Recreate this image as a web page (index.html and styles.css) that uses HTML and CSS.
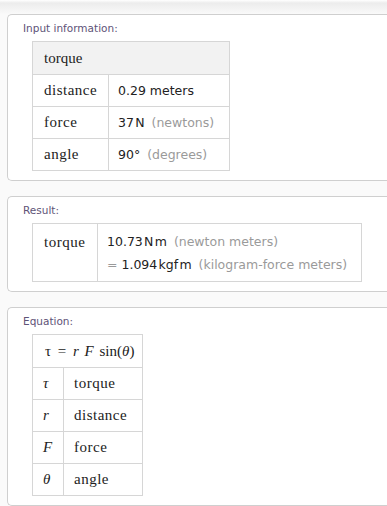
FILE: index.html
```html
<!DOCTYPE html>
<html>
<head>
<meta charset="utf-8">
<link rel="stylesheet" href="styles.css">
</head>
<body>
<div class="pods">
  <section class="pod">
    <div class="pod-title">Input information:</div>
    <table class="grid t-input">
      <colgroup><col class="c1"><col class="c2"></colgroup>
      <tr class="head"><td colspan="2" class="serif">torque</td></tr>
      <tr><td class="serif label">distance</td><td class="val">0.29 meters</td></tr>
      <tr><td class="serif label">force</td><td class="val">37<span class="thin"> </span>N <span class="unit">(newtons)</span></td></tr>
      <tr><td class="serif label">angle</td><td class="val">90° <span class="unit">(degrees)</span></td></tr>
    </table>
  </section>

  <section class="pod">
    <div class="pod-title">Result:</div>
    <table class="grid t-result">
      <colgroup><col class="c1"><col class="c2"></colgroup>
      <tr>
        <td class="serif label top">torque</td>
        <td class="val top">
          <div class="line">10.73<span class="thin"> </span>N<span class="thin"> </span>m <span class="unit">(newton meters)</span></div>
          <div class="line"><span class="eq">=</span> 1.094<span class="thin"> </span>kgf<span class="thin"> </span>m <span class="unit">(kilogram-force meters)</span></div>
        </td>
      </tr>
    </table>
  </section>

  <section class="pod">
    <div class="pod-title">Equation:</div>
    <table class="grid t-eq">
      <colgroup><col class="c1"><col class="c2"></colgroup>
      <tr class="eqhead"><td colspan="2" class="math">τ <span class="op">=</span> <i>r</i> <i>F</i> <span class="up">sin(</span><i>θ</i><span class="up">)</span></td></tr>
      <tr><td class="math sym"><i>τ</i></td><td class="serif label">torque</td></tr>
      <tr><td class="math sym"><i>r</i></td><td class="serif label">distance</td></tr>
      <tr><td class="math sym"><i>F</i></td><td class="serif label">force</td></tr>
      <tr><td class="math sym"><i>θ</i></td><td class="serif label">angle</td></tr>
    </table>
  </section>
</div>
</body>
</html>
```

FILE: styles.css
```css
html, body {
  margin: 0;
  padding: 0;
}
body {
  width: 387px;
  height: 506px;
  overflow: hidden;
  background: linear-gradient(#ffffff 0, #ececec 3px, #f7f7f7 12px, #fafafa 14px);
  font-family: "DejaVu Sans", sans-serif;
}
.pods {
  padding: 14px 0 0 7px;
  display: flex;
  flex-direction: column;
  gap: 15px;
}
.pod {
  background: #ffffff;
  border: 1px solid #cfcfcf;
  border-right: none;
  border-radius: 5px 0 0 5px;
  padding: 0 0 9px 15px;
}
.pod-title {
  padding-top: 6px;
  height: 14px;
  line-height: 14px;
  margin-bottom: 6px;
  font-size: 10.5px;
  color: #5e5377;
}
.grid {
  margin-left: 9px;
  border-collapse: collapse;
  table-layout: fixed;
}
.grid td {
  border: 1px solid #d6d6d6;
  padding: 0 0 0 11px;
  height: 31px;
  color: #222;
}
.serif {
  font-family: "Liberation Serif", serif;
  font-size: 15px;
}
.label {
  letter-spacing: 0.5px;
  color: #444;
}
.val {
  font-size: 12.5px;
  font-family: "DejaVu Sans", sans-serif;
  color: #111;
}
.grid .val { padding-left: 9px; }
.unit {
  color: #9a9a9a;
  margin-left: 3px;
}
.eq { color: #9a9a9a; }
.thin { font-size: 4px; }
.head td {
  background: #f2f2f2;
  height: 32px;
  color: #222;
}
.t-input { width: 197px; }
.t-input .c1 { width: 76px; }
.t-input .c2 { width: 121px; }

.t-result { width: 329px; }
.t-result .c1 { width: 65px; }
.t-result .c2 { width: 264px; }
.grid .top { height: 47px; vertical-align: top; padding-top: 10px; }
.t-result .line { height: 23px; line-height: 16px; }

.t-eq { width: 110px; }
.t-eq .c1 { width: 31px; }
.t-eq .c2 { width: 79px; }
.eqhead td { height: 32px; padding-left: 12px; word-spacing: 2px; }
.op { margin: 0 1px; }
.math {
  font-family: "Liberation Serif", serif;
  font-size: 15px;
  color: #222;
}
.math i { font-style: italic; }
.sym { color: #555; }
.grid .sym { padding-left: 10px; }
.t-eq .label { padding-left: 10px; }
```
